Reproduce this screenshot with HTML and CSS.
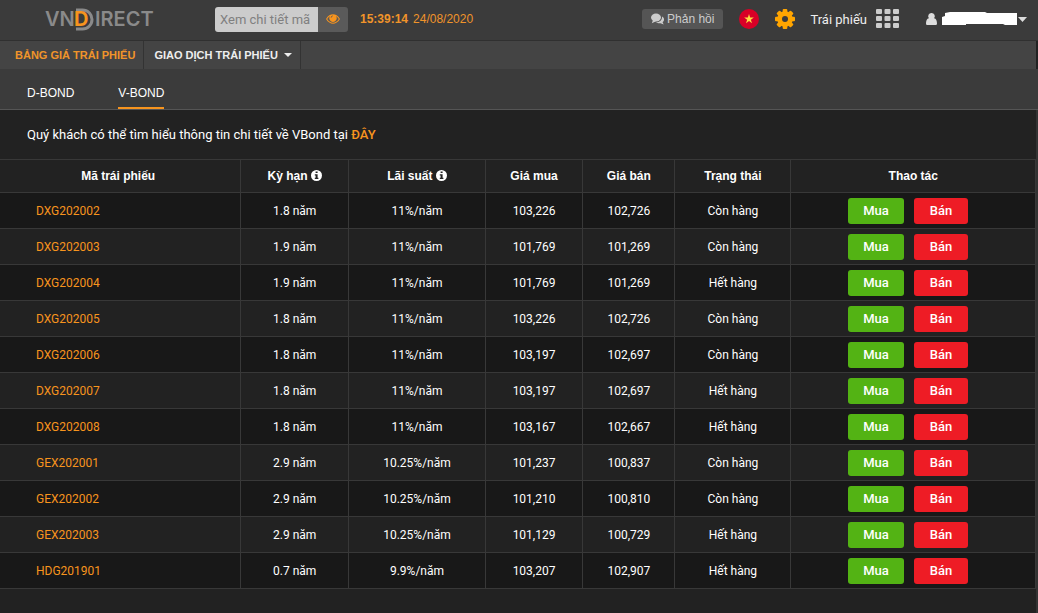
FILE: index.html
```html
<!DOCTYPE html>
<html lang="vi">
<head>
<meta charset="utf-8">
<meta name="viewport" content="width=device-width, initial-scale=1">
<title>VNDIRECT - Bảng giá trái phiếu</title>
<link rel="stylesheet" href="styles.css">
</head>
<body>
<header class="topbar">
  <a class="logo" href="#" aria-label="VNDIRECT">
    <svg width="112" height="26" viewBox="0 0 112 26">
      <path class="logo-arc" d="M31 4H37.500A9.500 9.500 0 0 1 37.500 23H31"/>
      <text class="logo-text" x="0" y="20">VN</text>
      <text class="logo-d" x="29" y="20">D</text>
      <text class="logo-text" x="50" y="20">IRECT</text>
    </svg>
  </a>
  <form class="search">
    <input class="search-input" type="text" placeholder="Xem chi tiết mã" aria-label="Xem chi tiết mã">
    <button class="search-button" type="button" aria-label="Xem">
      <svg width="14" height="10" viewBox="0 0 14 10"><path fill="#f7941e" fill-rule="evenodd" d="M0 5C2 1.700 4.500.3 7 .3S12 1.700 14 5C12 8.300 9.500 9.700 7 9.700S2 8.300 0 5ZM1.200 5C2.800 7.500 4.800 8.700 7 8.700S11.200 7.500 12.800 5C12 3.700 11 2.700 9.900 2.100A3.600 3.600 0 1 1 4.100 2.100C3 2.700 2 3.700 1.200 5ZM7 1.500C5.700 1.500 4.700 2.500 4.700 3.800H5.400C5.400 2.900 6.100 2.200 7 2.200Z"/></svg>
    </button>
  </form>
  <div class="clock"><b>15:39:14</b><span>24/08/2020</span></div>
  <div class="tools">
    <button class="feedback" type="button">
      <svg width="13" height="12" viewBox="0 0 13 12"><ellipse cx="5" cy="4.500" rx="5" ry="4"/><path d="M2 7 .8 10.200 5 8.300ZM11 3.500C14 5.300 13.400 8 11.600 9.200L12.700 11.500 9.500 10.300C7.500 10.500 6 10 5 9.300 8.500 9.300 11.300 7.300 11 3.500Z"/></svg>Phản hồi
    </button>
    <button class="flag" type="button" aria-label="Tiếng Việt">
      <svg width="20" height="20" viewBox="0 0 20 20"><circle cx="10" cy="10" r="10" fill="#d80027"/><path fill="#ffda44" d="m10 5 1.150 3.500h3.700l-3 2.200 1.150 3.500-3-2.200-3 2.200 1.150-3.500-3-2.200h3.700Z"/></svg>
    </button>
    <button class="gear" type="button" aria-label="Cài đặt">
      <svg width="20" height="20" viewBox="0 0 20 20"><g fill="#ffa500"><rect x="7.700" width="4.600" height="20" rx="1"/><rect x="7.700" width="4.600" height="20" rx="1" transform="rotate(45 10 10)"/><rect x="7.700" width="4.600" height="20" rx="1" transform="rotate(90 10 10)"/><rect x="7.700" width="4.600" height="20" rx="1" transform="rotate(135 10 10)"/><circle cx="10" cy="10" r="7.800"/></g><circle cx="10" cy="10" r="3" fill="#3b3b3b"/></svg>
    </button>
    <button class="product" type="button"><span class="product-name">Trái phiếu</span>
      <svg width="23" height="20" viewBox="0 0 23 20"><g fill="#ccc"><rect width="6" height="5" rx="1"/><rect x="8.500" width="6" height="5" rx="1"/><rect x="17" width="6" height="5" rx="1"/><rect y="7" width="6" height="5" rx="1"/><rect x="8.500" y="7" width="6" height="5" rx="1"/><rect x="17" y="7" width="6" height="5" rx="1"/><rect y="14" width="6" height="5" rx="1"/><rect x="8.500" y="14" width="6" height="5" rx="1"/><rect x="17" y="14" width="6" height="5" rx="1"/></g></svg>
    </button>
    <button class="account" type="button" aria-label="Tài khoản">
      <svg width="101" height="14" viewBox="0 0 101 14"><path fill="#ddd" d="M5.500 1a3.200 3.200 0 0 1 2.600 5.200C10.200 6.500 11 9 11 11.500c0 1-.7 1.500-1.500 1.500h-8C.7 13 0 12.500 0 11.500 0 9 .8 6.500 2.900 6.200A3.200 3.200 0 0 1 5.500 1Z"/><path fill="#fff" d="M16 13V5l3-1V1l5-1h35l2 1h30v12H79l-2-1H40v1Z"/><path fill="#ddd" d="M92 5h9l-4.500 5Z"/></svg>
    </button>
  </div>
</header>
<nav class="menu">
  <a class="menu-item menu-active" href="#">BẢNG GIÁ TRÁI PHIẾU</a>
  <a class="menu-item" href="#">GIAO DỊCH TRÁI PHIẾU <span class="caret"></span></a>
</nav>
<nav class="tabs">
  <a class="tab" href="#">D-BOND</a>
  <a class="tab tab-active" href="#">V-BOND</a>
</nav>
<main class="content">
  <p class="intro">Quý khách có thể tìm hiểu thông tin chi tiết về VBond tại <a href="#">ĐÂY</a></p>
  <table class="bonds">
    <colgroup><col class="col-code"><col class="col-term"><col class="col-rate"><col class="col-buy"><col class="col-sell"><col class="col-status"><col class="col-action"></colgroup>
    <thead>
      <tr>
        <th>Mã trái phiếu</th>
        <th>Kỳ hạn <svg class="info" width="11" height="11" viewBox="0 0 11 11"><circle cx="5.500" cy="5.500" r="5.500" fill="#fff"/><path fill="#222" d="M4.600 1.500h2v1.600h-2ZM3.800 4.200h2.800v3.600h.8v1.300H3.800V7.800h.8V5.500h-.8Z"/></svg></th>
        <th>Lãi suất <svg class="info" width="11" height="11" viewBox="0 0 11 11"><circle cx="5.500" cy="5.500" r="5.500" fill="#fff"/><path fill="#222" d="M4.600 1.500h2v1.600h-2ZM3.800 4.200h2.800v3.600h.8v1.300H3.800V7.800h.8V5.500h-.8Z"/></svg></th>
        <th>Giá mua</th><th>Giá bán</th><th>Trạng thái</th><th>Thao tác</th>
      </tr>
    </thead>
    <tbody>
      <tr><td><a href="#">DXG202002</a></td><td>1.8 năm</td><td>11%/năm</td><td>103,226</td><td>102,726</td><td>Còn hàng</td><td><div class="actions"><button class="buy" type="button">Mua</button><button class="sell" type="button">Bán</button></div></td></tr>
      <tr><td><a href="#">DXG202003</a></td><td>1.9 năm</td><td>11%/năm</td><td>101,769</td><td>101,269</td><td>Còn hàng</td><td><div class="actions"><button class="buy" type="button">Mua</button><button class="sell" type="button">Bán</button></div></td></tr>
      <tr><td><a href="#">DXG202004</a></td><td>1.9 năm</td><td>11%/năm</td><td>101,769</td><td>101,269</td><td>Hết hàng</td><td><div class="actions"><button class="buy" type="button">Mua</button><button class="sell" type="button">Bán</button></div></td></tr>
      <tr><td><a href="#">DXG202005</a></td><td>1.8 năm</td><td>11%/năm</td><td>103,226</td><td>102,726</td><td>Còn hàng</td><td><div class="actions"><button class="buy" type="button">Mua</button><button class="sell" type="button">Bán</button></div></td></tr>
      <tr><td><a href="#">DXG202006</a></td><td>1.8 năm</td><td>11%/năm</td><td>103,197</td><td>102,697</td><td>Còn hàng</td><td><div class="actions"><button class="buy" type="button">Mua</button><button class="sell" type="button">Bán</button></div></td></tr>
      <tr><td><a href="#">DXG202007</a></td><td>1.8 năm</td><td>11%/năm</td><td>103,197</td><td>102,697</td><td>Hết hàng</td><td><div class="actions"><button class="buy" type="button">Mua</button><button class="sell" type="button">Bán</button></div></td></tr>
      <tr><td><a href="#">DXG202008</a></td><td>1.8 năm</td><td>11%/năm</td><td>103,167</td><td>102,667</td><td>Hết hàng</td><td><div class="actions"><button class="buy" type="button">Mua</button><button class="sell" type="button">Bán</button></div></td></tr>
      <tr><td><a href="#">GEX202001</a></td><td>2.9 năm</td><td>10.25%/năm</td><td>101,237</td><td>100,837</td><td>Còn hàng</td><td><div class="actions"><button class="buy" type="button">Mua</button><button class="sell" type="button">Bán</button></div></td></tr>
      <tr><td><a href="#">GEX202002</a></td><td>2.9 năm</td><td>10.25%/năm</td><td>101,210</td><td>100,810</td><td>Còn hàng</td><td><div class="actions"><button class="buy" type="button">Mua</button><button class="sell" type="button">Bán</button></div></td></tr>
      <tr><td><a href="#">GEX202003</a></td><td>2.9 năm</td><td>10.25%/năm</td><td>101,129</td><td>100,729</td><td>Hết hàng</td><td><div class="actions"><button class="buy" type="button">Mua</button><button class="sell" type="button">Bán</button></div></td></tr>
      <tr><td><a href="#">HDG201901</a></td><td>0.7 năm</td><td>9.9%/năm</td><td>103,207</td><td>102,907</td><td>Hết hàng</td><td><div class="actions"><button class="buy" type="button">Mua</button><button class="sell" type="button">Bán</button></div></td></tr>
    </tbody>
  </table>
</main>
</body>
</html>
```
FILE: styles.css
```css
* { box-sizing: border-box; }
body {
  margin: 0;
  min-height: 100vh;
  display: flex;
  flex-direction: column;
  background: #222;
  color: #fff;
  font: 12px/18px "Liberation Sans", Arial, sans-serif;
}
a { color: #f7941e; text-decoration: none; }
button { border: 0; margin: 0; padding: 0; background: none; color: inherit; font: inherit; cursor: pointer; }
svg { display: block; }

.topbar {
  display: flex;
  align-items: center;
  height: 41px;
  padding: 0 11px 2px 45px;
  background: #3b3b3b;
  border-bottom: 1px solid #303030;
}
.logo { margin-right: 58px; }
.logo-arc { fill: none; stroke: #8a8a8a; stroke-width: 3; }
.logo-text { font: 600 20px Inter, sans-serif; fill: #8a8a8a; }
.logo-d { font: 700 20px Inter, sans-serif; fill: #f7941e; }
.search { display: flex; height: 25px; border-radius: 3px; overflow: hidden; }
.search-input {
  width: 103px;
  border: 0;
  padding: 0 5px;
  background: #ccc;
  font: 13px Roboto, "Liberation Sans", sans-serif;
}
.search-input::placeholder { color: #808080; opacity: 1; }
.search-button { display: flex; align-items: center; justify-content: center; width: 30px; background: #5a5a5a; }
.clock { display: flex; gap: 5px; margin-left: 12px; color: #f0942a; white-space: nowrap; }
.tools { display: flex; align-items: center; margin-left: auto; }
.feedback {
  display: flex;
  align-items: center;
  gap: 3px;
  height: 20px;
  padding: 0 9px;
  border-radius: 3px;
  background: #555;
  color: #ccc;
  white-space: nowrap;
}
.feedback svg { fill: #ccc; }
.flag { margin-left: 16px; }
.gear { margin-left: 16px; }
.product { display: flex; align-items: center; gap: 9px; margin-left: 15px; color: #eee; font: 13px/18px Roboto, sans-serif; white-space: nowrap; }
.product-name { padding-top: 2px; }
.account { margin-left: 27px; }

.menu { display: flex; height: 28px; margin-right: 2px; background: #444; }
.menu-item {
  display: flex;
  align-items: center;
  gap: 6px;
  padding: 0 8px 0 10px;
  border-right: 1px solid #333;
  color: #eee;
  font-size: 11px;
  font-weight: 700;
}
.menu-active { padding-left: 15px; color: #f0942a; }
.caret { border: 4px solid transparent; border-top-color: #eee; border-bottom: 0; }

.tabs { display: flex; gap: 44px; height: 41px; padding: 0 27px; background: #3b3b3b; border-bottom: 1px solid #555; }
.tab { padding-top: 15px; color: #fff; border-bottom: 2px solid transparent; }
.tab-active { border-color: #f7941e; }

.content { flex: 1; border-right: 2px solid #333; }
.intro { margin: 0; padding: 16px 27px 15px; font: 13px/18px Roboto, "Liberation Sans", sans-serif; }
.intro a { font-weight: 500; }
.bonds { width: 100%; table-layout: fixed; border-collapse: separate; border-spacing: 0; border-top: 1px solid #383838; }
.bonds th, .bonds td {
  padding: 0;
  border-right: 1px solid #383838;
  border-bottom: 1px solid #383838;
  text-align: center;
  vertical-align: middle;
}
.bonds th { height: 33px; font-weight: 700; }
.bonds th:first-child { padding-right: 4px; }
.bonds td { height: 36px; font-family: Roboto, "Liberation Sans", sans-serif; }
.bonds tbody tr:nth-child(odd) { background: #181818; }
.bonds td:first-child { padding-left: 36px; text-align: left; }
.col-code { width: 23.3%; }
.col-term { width: 10.4%; }
.col-rate { width: 13.2%; }
.col-buy { width: 9.4%; }
.col-sell { width: 8.9%; }
.col-status { width: 11.2%; }
.info { display: inline-block; vertical-align: -1px; }
.actions { display: flex; justify-content: center; gap: 10px; padding-right: 10px; }
.buy, .sell { height: 26px; padding: 0 15px; border-radius: 3px; font-size: 13px; font-weight: 500; }
.buy { background: #53b314; }
.sell { padding: 0 16px; background: #ee1c25; }
```
